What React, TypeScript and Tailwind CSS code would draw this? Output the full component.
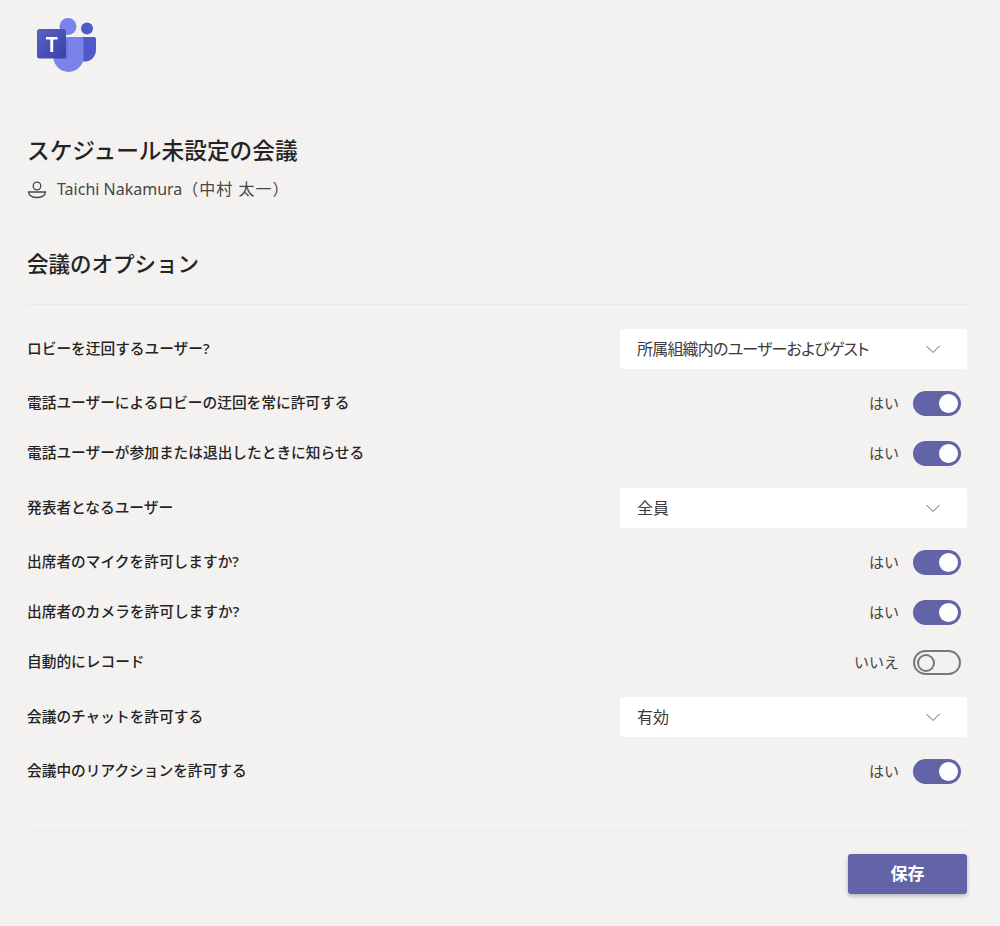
import React from "react";

function Chevron() {
  return (
    <svg width="16" height="16" viewBox="0 0 16 16" fill="none" className="shrink-0">
      <path d="M1.5 5 L8 11.5 L14.5 5" stroke="#605e5c" strokeWidth="1" />
    </svg>
  );
}

function Label({ children }: { children: React.ReactNode }) {
  return <div className="pb-[2px] text-[14.7px] font-medium text-[#252423]">{children}</div>;
}

function DropRow({ label, value, tight }: { label: string; value: string; tight?: boolean }) {
  return (
    <div className="flex items-center justify-between h-10">
      <Label>{label}</Label>
      <div className="w-[347px] h-10 bg-white rounded-[3px] flex items-center justify-between pb-[1px] pl-[17px] pr-[26px] text-[16px] text-[#3b3a39] [font-feature-settings:'palt']">
        <span className={tight ? "tracking-[-0.8px]" : ""}>{value}</span>
        <Chevron />
      </div>
    </div>
  );
}

function ToggleRow({ label, on }: { label: string; on: boolean }) {
  return (
    <div className="flex items-center justify-between h-[31px]">
      <Label>{label}</Label>
      <div className="flex items-center gap-[14px] pr-[6px]">
        <span className="text-[15px] text-[#484644]">{on ? "はい" : "いいえ"}</span>
        {on ? (
          <div className="w-[48px] h-[25px] rounded-full bg-[#6264a7] flex items-center justify-end pr-[3px]">
            <div className="w-[19px] h-[19px] rounded-full bg-white" />
          </div>
        ) : (
          <div className="w-[48px] h-[25px] rounded-full border-2 border-[#7a7876] flex items-center pl-[2px]">
            <div className="w-[18px] h-[18px] rounded-full border-2 border-[#7a7876]" />
          </div>
        )}
      </div>
    </div>
  );
}

function TeamsLogo() {
  return (
    <svg width="64" height="60" viewBox="0 0 64 60" className="block">
      <defs>
        <linearGradient id="tile" x1="0" y1="0" x2="1" y2="1">
          <stop offset="0" stopColor="#5a62c3" />
          <stop offset="1" stopColor="#3940ab" />
        </linearGradient>
      </defs>
      <circle cx="55" cy="11.5" r="6" fill="#5059c9" />
      <path d="M44 20 H62 a2 2 0 0 1 2 2 V33 a11.5 11.5 0 0 1 -11.5 11.5 H44 Z" fill="#5059c9" />
      <circle cx="36" cy="9.5" r="8.5" fill="#7b83eb" />
      <path d="M23 20 H49 a2.5 2.5 0 0 1 2.5 2.5 V40 a15 15 0 0 1 -30 0 V22 Z" fill="#7b83eb" />
      <path d="M21 23 H36 V42 H26 Z" fill="#4a50b0" opacity="0.25" />
      <rect x="5" y="12" width="29" height="29.5" rx="2.5" fill="url(#tile)" />
      <path d="M14 20 H25.5 V22.6 H21.2 V35 H18.3 V22.6 H14 Z" fill="#ffffff" />
    </svg>
  );
}

export default function App() {
  return (
    <div
      className="w-[1000px] h-[926px] bg-[#f3f2f1] pl-[27px] pr-[33px] overflow-hidden"
      style={{ fontFamily: '"Noto Sans", "Noto Sans CJK JP", sans-serif' }}
    >
      <div className="h-[118px] pt-[17px] pl-[5px]">
        <TeamsLogo />
      </div>
      <h1 className="mt-[13px] text-[22.7px] leading-[40px] font-medium text-[#252423]">
        スケジュール未設定の会議
      </h1>
      <div className="mt-[6px] flex items-center gap-[10px] h-[24px] text-[16px] text-[#484644]">
        <svg width="20" height="20" viewBox="0 0 20 20" fill="none" stroke="#484644" strokeWidth="1.3">
          <circle cx="10" cy="7" r="3.8" />
          <path d="M1.5 13 H18.5 C18.5 16.5 14 18.5 10 18.5 C6 18.5 1.5 16.5 1.5 13 Z" />
        </svg>
        <span>
          Taichi Nakamura<span className="tracking-[1px]">（中村 太一）</span>
        </span>
      </div>
      <h2 className="mt-[43px] text-[21.5px] leading-[40px] font-medium text-[#252423]">会議のオプション</h2>
      <div className="mt-[20px] border-t border-[#ebe9e8] pt-[24px] flex flex-col gap-[19px]">
        <DropRow label="ロビーを迂回するユーザー?" value="所属組織内のユーザーおよびゲスト" tight />
        <ToggleRow label="電話ユーザーによるロビーの迂回を常に許可する" on />
        <ToggleRow label="電話ユーザーが参加または退出したときに知らせる" on />
        <DropRow label="発表者となるユーザー" value="全員" />
        <ToggleRow label="出席者のマイクを許可しますか?" on />
        <ToggleRow label="出席者のカメラを許可しますか?" on />
        <ToggleRow label="自動的にレコード" on={false} />
        <DropRow label="会議のチャットを許可する" value="有効" />
        <ToggleRow label="会議中のリアクションを許可する" on />
      </div>
      <div className="mt-[43px] border-t border-[#ebe9e8] pt-[23px] flex justify-end">
        <button className="w-[119px] h-[40px] bg-[#6264a7] rounded-[3px] text-white text-[17px] font-bold shadow-[0_2px_4px_rgba(0,0,0,0.25)]">
          保存
        </button>
      </div>
    </div>
  );
}
